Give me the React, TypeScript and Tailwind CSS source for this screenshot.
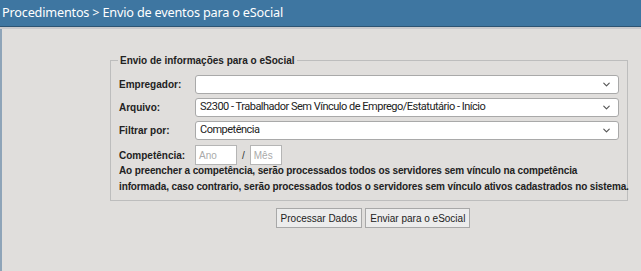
import { ChevronDown } from "lucide-react"

const selects = [
    { label: "Empregador:", value: "" },
    { label: "Arquivo:", value: "S2300 - Trabalhador Sem Vínculo de Emprego/Estatutário - Início" },
    { label: "Filtrar por:", value: "Competência" },
]

function FakeSelect({ value }: { value: string }) {
    return (
        <div className="flex h-[19px] flex-1 items-center justify-between rounded-[3px] border border-[#a9a9a9] bg-white pl-[4px] pr-[6px] font-['Roboto',sans-serif] text-[11px] tracking-[-0.5px] text-[#222]">
            <span>{value}</span>
            <ChevronDown className="h-[11px] w-[11px] text-[#555]" strokeWidth={2.5} />
        </div>
    )
}

export default function App() {
    return (
        <div className="flex h-[271px] w-[641px] flex-col bg-[#e0dedc] font-['Liberation_Sans',Arial,sans-serif]">
            <div className="flex h-[27px] items-center border-b border-[#2c5473] bg-[#3e76a1] pl-[2px] font-['Noto_Sans',sans-serif] text-[12.7px] tracking-[-0.2px] text-white">
                Procedimentos &gt; Envio de eventos para o eSocial
            </div>
            <div className="h-[2px] bg-[#c9c9cc]" />
            <div className="flex flex-1 flex-col border-l-2 border-[#8ea4b8] pl-[108px] pr-[13px] pt-[24px]">
                <fieldset className="min-w-0 border border-[#bdbdbd] px-[8px] pb-[5px] pt-[7px]">
                    <legend className="ml-[-1px] px-[2px] text-[10px] font-bold text-[#222]">
                        Envio de informações para o eSocial
                    </legend>
                    <div className="flex flex-col gap-[4px]">
                        {selects.map((s, i) => (
                            <div key={i} className="flex items-center">
                                <div className="w-[76px] text-[10px] font-bold text-[#222]">{s.label}</div>
                                <FakeSelect value={s.value} />
                            </div>
                        ))}
                        <div className="mt-[1px] flex items-center">
                            <div className="w-[76px] text-[10px] font-bold text-[#222]">Competência:</div>
                            <div className="flex h-[20px] w-[42px] items-center border border-[#b5b5b5] bg-white pl-[3px] text-[10px] text-[#aaa]">Ano</div>
                            <span className="mx-[5px] text-[10px] text-[#333]">/</span>
                            <div className="flex h-[20px] w-[32px] items-center border border-[#b5b5b5] bg-white pl-[3px] text-[10px] text-[#aaa]">Mês</div>
                        </div>
                        <p className="mt-[-6px] whitespace-nowrap text-[10px] font-bold leading-[16px] tracking-[-0.13px] text-[#222]">
                            Ao preencher a competência, serão processados todos os servidores sem vínculo na competência
                            <br />
                            informada, caso contrario, serão processados todos o servidores sem vínculo ativos cadastrados no sistema.
                        </p>
                    </div>
                </fieldset>
                <div className="mt-[7px] flex justify-center gap-[3px] pl-[8px]">
                    <button className="h-[20px] border border-[#a8a8a8] bg-[#ececec] px-[4px] text-[10px] text-[#222]">Processar Dados</button>
                    <button className="h-[20px] border border-[#a8a8a8] bg-[#ececec] px-[4px] text-[10px] text-[#222]">Enviar para o eSocial</button>
                </div>
            </div>
        </div>
    )
}
